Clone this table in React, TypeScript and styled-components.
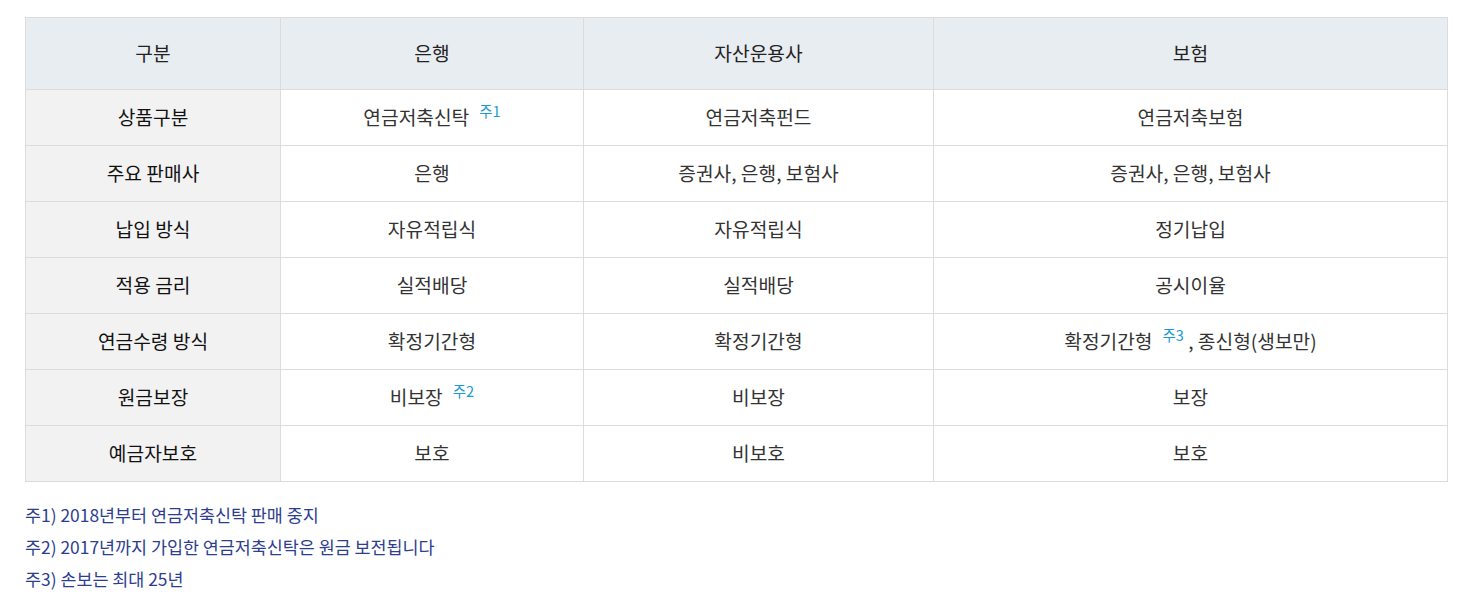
import styled, { createGlobalStyle } from 'styled-components';

const GlobalStyle = createGlobalStyle`
  body {
    margin: 0;
    background: #fff;
    font-family: "Noto Sans CJK KR", "Noto Sans", sans-serif;
    color: #333;
  }
`;

type Cell = { text: string; note?: string; after?: string };

const columns = ['구분', '은행', '자산운용사', '보험'];

const rows: { label: string; cells: Cell[] }[] = [
  {
    label: '상품구분',
    cells: [{ text: '연금저축신탁', note: '주1' }, { text: '연금저축펀드' }, { text: '연금저축보험' }],
  },
  {
    label: '주요 판매사',
    cells: [{ text: '은행' }, { text: '증권사, 은행, 보험사' }, { text: '증권사, 은행, 보험사' }],
  },
  {
    label: '납입 방식',
    cells: [{ text: '자유적립식' }, { text: '자유적립식' }, { text: '정기납입' }],
  },
  {
    label: '적용 금리',
    cells: [{ text: '실적배당' }, { text: '실적배당' }, { text: '공시이율' }],
  },
  {
    label: '연금수령 방식',
    cells: [
      { text: '확정기간형' },
      { text: '확정기간형' },
      { text: '확정기간형', note: '주3', after: ', 종신형(생보만)' },
    ],
  },
  {
    label: '원금보장',
    cells: [{ text: '비보장', note: '주2' }, { text: '비보장' }, { text: '보장' }],
  },
  {
    label: '예금자보호',
    cells: [{ text: '보호' }, { text: '비보호' }, { text: '보호' }],
  },
];

const notes = [
  '주1) 2018년부터 연금저축신탁 판매 중지',
  '주2) 2017년까지 가입한 연금저축신탁은 원금 보전됩니다',
  '주3) 손보는 최대 25년',
];

export default function App() {
  return (
    <Page>
      <GlobalStyle />
      <Table>
        <colgroup>
          <col style={{ width: 255 }} />
          <col style={{ width: 303 }} />
          <col style={{ width: 350 }} />
          <col />
        </colgroup>
        <thead>
          <tr>
            {columns.map((c) => (
              <HeadCell key={c}>{c}</HeadCell>
            ))}
          </tr>
        </thead>
        <tbody>
          {rows.map((row) => (
            <tr key={row.label}>
              <LabelCell>{row.label}</LabelCell>
              {row.cells.map((cell, i) => (
                <BodyCell key={i}>
                  {cell.text}
                  {cell.note && <Note>{cell.note}</Note>}
                  {cell.after && <> {cell.after}</>}
                </BodyCell>
              ))}
            </tr>
          ))}
        </tbody>
      </Table>
      <Notes>
        {notes.map((n) => (
          <NoteLine key={n}>{n}</NoteLine>
        ))}
      </Notes>
    </Page>
  );
}

const Page = styled.div`
  padding: 17px 12px 0 25px;
`;

const Table = styled.table`
  width: 1423px;
  border-collapse: collapse;
  table-layout: fixed;
  border: 1px solid #dcdcdc;
  font-size: 19.2px;
  line-height: 1.4;
`;

const HeadCell = styled.th`
  height: 71px;
  padding: 0;
  background: #e8edf1;
  border: 1px solid #dcdcdc;
  color: #222;
  font-weight: 400;
  text-align: center;
  vertical-align: middle;
`;

const BodyCell = styled.td`
  height: 55px;
  padding: 0;
  border: 1px solid #dcdcdc;
  color: #333;
  text-align: center;
  vertical-align: middle;
`;

const LabelCell = styled(BodyCell)`
  background: #f2f2f2;
  color: #111;
`;

const Note = styled.sup`
  margin-left: 10px;
  font-size: 14.5px;
  color: #1a9ad6;
  vertical-align: 8px;
  line-height: 0;
`;

const Notes = styled.div`
  margin-top: 17px;
`;

const NoteLine = styled.p`
  margin: 0;
  font-size: 17.4px;
  line-height: 32px;
  color: #2d3e8f;
`;
